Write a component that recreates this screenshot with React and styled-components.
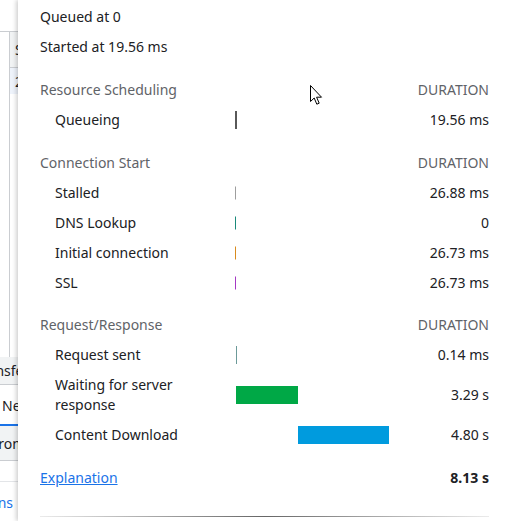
import React from "react";
import styled, { createGlobalStyle } from "styled-components";

const GlobalStyle = createGlobalStyle`
  html, body {
    margin: 0;
    padding: 0;
    background: #ffffff;
  }
  body {
    font-family: "Noto Sans", "Open Sans", sans-serif;
    font-size: 13px;
    color: #202124;
  }
`;

const TIMELINE_WIDTH = 154;
const TOTAL = 8.13;

const Page = styled.div`
  position: relative;
  display: flex;
  width: 505px;
  height: 521px;
  overflow: hidden;
`;

const Strip = styled.div`
  width: 18px;
  flex-shrink: 0;
  display: flex;
  flex-direction: column;
  overflow: hidden;
  background: #ffffff;
`;

const StripCell = styled.div`
  height: ${(p) => p.h}px;
  flex-shrink: 0;
  display: flex;
  align-items: center;
  justify-content: ${(p) => (p.right ? "flex-end" : "flex-start")};
  padding-right: ${(p) => (p.right ? "5px" : "0")};
  white-space: nowrap;
  overflow: hidden;
  font-size: 14px;
  color: ${(p) => (p.link ? "#1a73e8" : "#202124")};
  background: ${(p) => p.bg || "transparent"};
  border-bottom: ${(p) =>
    p.line ? `1px solid ${p.line === "light" ? "#e3e5e8" : "#cacdd1"}` : "none"};
  border-left: ${(p) => (p.divider ? "1px solid #cacdd1" : "none")};
  margin-left: ${(p) => (p.divider ? "9px" : "0")};
  padding-left: ${(p) => (p.divider ? "5px" : "0")};
  box-shadow: ${(p) => (p.tab ? "inset 0 -2px 0 #1a73e8" : "none")};
`;

const StripText = styled.span`
  flex-shrink: 0;
  margin-left: ${(p) => p.shift || 0}px;
`;

const Popup = styled.div`
  flex: 1;
  display: flex;
  flex-direction: column;
  padding: 2px 16px 0 22px;
  background: #ffffff;
  box-shadow: -2px 0 4px rgba(0, 0, 0, 0.18);
  z-index: 1;
`;

const InfoLine = styled.div`
  line-height: 20px;
  padding: 5px 0;
  font-size: 14px;
`;

const Section = styled.div`
  display: flex;
  flex-direction: column;
  margin-top: ${(p) => p.gap || 13}px;
`;

const Row = styled.div`
  display: grid;
  grid-template-columns: 195px ${TIMELINE_WIDTH + 10}px 1fr;
  align-items: center;
  padding: 5px 0;
  line-height: 20px;
  font-size: 14px;
`;

const HeaderLabel = styled.div`
  color: #5f6368;
  grid-column: 1 / 3;
`;

const HeaderRight = styled.div`
  color: #5f6368;
  text-align: right;
`;

const Label = styled.div`
  padding-left: 15px;
  padding-right: 20px;
`;

const Timeline = styled.div`
  position: relative;
  height: 20px;
`;

const Bar = styled.div`
  position: absolute;
  top: 50%;
  transform: translateY(-50%);
  height: ${(p) => p.h}px;
  background: ${(p) => p.color};
`;

const Duration = styled.div`
  text-align: right;
  font-weight: ${(p) => (p.bold ? 700 : 400)};
`;

const Link = styled.a`
  color: #1a73e8;
  text-decoration: underline;
  cursor: pointer;
`;

const Rule = styled.div`
  margin-top: 23px;
  height: 1px;
  background: linear-gradient(
    to right,
    rgba(0, 0, 0, 0.08),
    #666666 50%,
    rgba(0, 0, 0, 0.08)
  );
`;

const Cursor = styled.svg`
  position: absolute;
  left: 310px;
  top: 85px;
  z-index: 2;
`;

const sections = [
  {
    title: "Resource Scheduling",
    gap: 13,
    rows: [
      { label: "Queueing", start: 0, width: 2, h: 18, color: "#585858", dur: "19.56 ms" },
    ],
  },
  {
    title: "Connection Start",
    gap: 13,
    rows: [
      { label: "Stalled", start: 0, width: 1, h: 13, color: "#9e9e9e", dur: "26.88 ms" },
      { label: "DNS Lookup", start: 0, width: 1, h: 13, color: "#1a8a7a", dur: "0" },
      { label: "Initial connection", start: 0, width: 1, h: 13, color: "#d98b1e", dur: "26.73 ms" },
      { label: "SSL", start: 0, width: 1, h: 13, color: "#a538c4", dur: "26.73 ms" },
    ],
  },
  {
    title: "Request/Response",
    gap: 12,
    rows: [
      { label: "Request sent", start: 0.06, width: 1, h: 18, color: "#6c9a99", dur: "0.14 ms" },
      { label: "Waiting for server response", start: 0.06, secs: 3.29, h: 18, color: "#00a846", dur: "3.29 s" },
      { label: "Content Download", start: 3.33, secs: 4.8, h: 18, color: "#009bde", dur: "4.80 s" },
    ],
  },
];

const barLeft = (start) => Math.round((start / TOTAL) * TIMELINE_WIDTH);
const barWidth = (r) =>
  r.secs ? Math.round((r.secs / TOTAL) * TIMELINE_WIDTH) : r.width;

const App = () => (
  <Page>
    <GlobalStyle />
    <Strip>
      <StripCell h={31} line />
      <StripCell h={35} bg="#f1f3f4" line divider>
        <StripText>Size</StripText>
      </StripCell>
      <StripCell h={26} bg="#eef3fb" divider>
        <StripText>2.1 kB</StripText>
      </StripCell>
      <StripCell h={263} divider />
      <StripCell h={27} bg="#f1f3f4" line>
        <StripText shift={-25}>Transferred</StripText>
      </StripCell>
      <StripCell h={41} tab>
        <StripText shift={2}>Network</StripText>
      </StripCell>
      <StripCell h={34} bg="#f1f3f4" line>
        <StripText shift={-9}>From</StripText>
      </StripCell>
      <StripCell h={20} line="light" />
      <StripCell h={40} link right>
        <StripText>Options</StripText>
      </StripCell>
    </Strip>

    <Popup>
      <InfoLine>Queued at 0</InfoLine>
      <InfoLine>Started at 19.56 ms</InfoLine>

      {sections.map((s) => (
        <Section key={s.title} gap={s.gap}>
          <Row>
            <HeaderLabel>{s.title}</HeaderLabel>
            <HeaderRight>DURATION</HeaderRight>
          </Row>
          {s.rows.map((r) => (
            <Row key={r.label}>
              <Label>{r.label}</Label>
              <Timeline>
                <Bar
                  h={r.h}
                  color={r.color}
                  style={{ left: barLeft(r.start), width: barWidth(r) }}
                />
              </Timeline>
              <Duration>{r.dur}</Duration>
            </Row>
          ))}
        </Section>
      ))}

      <Section gap={13}>
        <Row>
          <HeaderLabel>
            <Link>Explanation</Link>
          </HeaderLabel>
          <Duration bold>8.13 s</Duration>
        </Row>
      </Section>
      <Rule />
    </Popup>

    <Cursor width="14" height="21" viewBox="0 0 14 21">
      <path
        d="M0.5 0.5 L0.5 16.5 L4.2 13 L6.8 19.2 L9.2 18.2 L6.6 12.2 L11.5 12.2 Z"
        fill="#ffffff"
        stroke="#000000"
        strokeWidth="1"
        strokeLinejoin="round"
      />
    </Cursor>
  </Page>
);

export default App;
